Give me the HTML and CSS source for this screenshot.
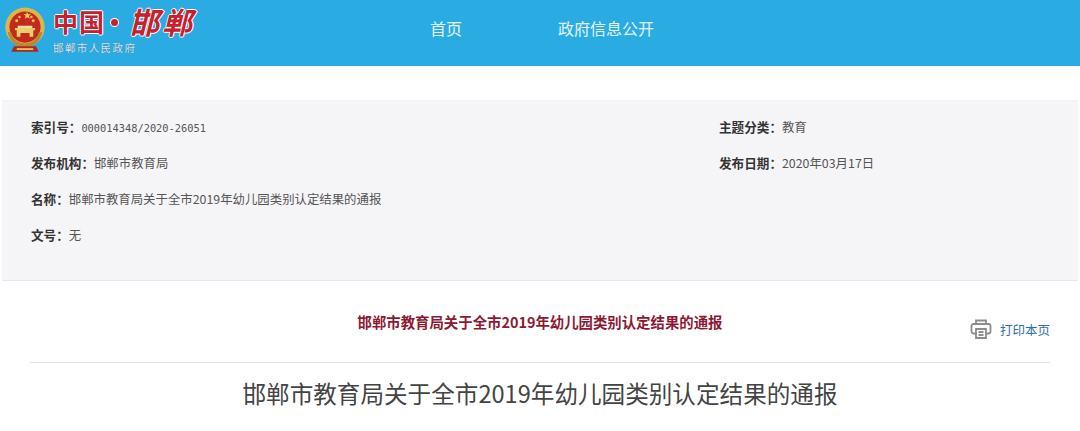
FILE: index.html
```html
<!DOCTYPE html>
<html lang="zh-CN">
<head>
<meta charset="utf-8">
<title>邯郸市教育局关于全市2019年幼儿园类别认定结果的通报</title>
<link rel="stylesheet" href="styles.css">
</head>
<body>
<header class="topbar">
  <a class="logo">
    <svg class="emblem" viewBox="0 0 48 54" width="44" height="49.500" aria-hidden="true">
      <circle cx="24" cy="23" r="21.500" fill="#d9b64e"/>
      <circle cx="24" cy="23" r="17" fill="#c5281f"/>
      <path d="M26 6l1.500 3 3-.4-2.200 2.200 1 3-2.800-1.500-2.800 1.500 1-3-2.200-2.200 3 .4z" fill="#f2d250"/>
      <circle cx="15" cy="16" r="1.600" fill="#f2d250"/><circle cx="18" cy="12" r="1.300" fill="#f2d250"/>
      <circle cx="33" cy="16" r="1.600" fill="#f2d250"/><circle cx="31" cy="12" r="1.300" fill="#f2d250"/>
      <path d="M13 24h22v2.500h-2v7h-4v-4h-10v4h-4v-7h-2z" fill="#edcf6a"/>
      <path d="M16 21.500h16v2.500h-16z" fill="#f4e1a0"/>
      <path d="M5 28c2 11 10 17 19 17s17-6 19-17l-4 1c-2 8-8 12-15 12s-13-4-15-12z" fill="#b98a2e"/>
      <path d="M12 44h24l3 6h-30z" fill="#b3261d"/>
      <path d="M15 46h18v2h-18z" fill="#e7c35e"/>
    </svg>
    <div class="brand">
      <div class="brand-name"><span class="cn">中国</span><span class="dot"></span><span class="city">邯郸</span></div>
      <div class="brand-sub">邯郸市人民政府</div>
    </div>
  </a>
  <nav class="nav">
    <a class="nav-home">首页</a>
    <a class="nav-info">政府信息公开</a>
  </nav>
</header>

<main class="sheet">
  <section class="meta">
    <div class="meta-row">
      <div><b>索引号：</b><span class="mono">000014348/2020-26051</span></div>
      <div class="meta-right"><b>主题分类：</b>教育</div>
    </div>
    <div class="meta-row">
      <div><b>发布机构：</b>邯郸市教育局</div>
      <div class="meta-right"><b>发布日期：</b>2020年03月17日</div>
    </div>
    <div class="meta-row"><div><b>名称：</b>邯郸市教育局关于全市2019年幼儿园类别认定结果的通报</div></div>
    <div class="meta-row"><div><b>文号：</b>无</div></div>
  </section>

  <section class="body">
    <div class="title-bar">
      <h2 class="red-title">邯郸市教育局关于全市2019年幼儿园类别认定结果的通报</h2>
      <a class="print">
        <svg class="print-icon" viewBox="0 0 22 22" width="22" height="22" aria-hidden="true">
          <path d="M6 6V2.500h10V6M6 15.500H3.500a2 2 0 0 1-2-2V8a2 2 0 0 1 2-2h15a2 2 0 0 1 2 2v5.500a2 2 0 0 1-2 2H16" fill="none" stroke="#8c8c8c" stroke-width="1.800"/>
          <path d="M6 11h10v9H6zM8.500 14h5M8.500 17h5" fill="none" stroke="#8c8c8c" stroke-width="1.800"/>
        </svg>
        <span>打印本页</span>
      </a>
    </div>
    <h1 class="doc-title">邯郸市教育局关于全市2019年幼儿园类别认定结果的通报</h1>
  </section>
</main>
</body>
</html>
```

FILE: styles.css
```css
* { box-sizing: border-box; }
html, body { margin: 0; height: 431px; overflow: hidden; background: #fff; }
body { font-family: "Noto Sans CJK SC", "Liberation Sans", sans-serif; color: #4a4a4a; }

.topbar {
  height: 66px;
  background: #2aace3;
  display: flex;
  align-items: center;
}
.logo { display: flex; align-items: flex-start; width: 430px; padding-left: 3px; height: 66px; }
.emblem { margin: 6px 0 0 0; flex: none; }
.brand { margin-left: 6px; padding-top: 5px; }
.brand-name {
  display: flex;
  align-items: center;
  height: 32px;
  color: #c8202d;
  font-weight: 700;
  font-size: 25px;
  line-height: 32px;
  text-shadow: 1px 0 0 #fff, -1px 0 0 #fff, 0 1px 0 #fff, 0 -1px 0 #fff;
}
.cn { letter-spacing: 1px; }
.dot { width: 7px; height: 7px; margin: 2px 11px 0 6px; border-radius: 50%; background: #c8202d; box-shadow: 0 0 0 1px #fff; }
.city { display: block; font-size: 30px; line-height: 34px; padding-right: 6px; letter-spacing: 3px; font-style: italic; margin-top: -1px; }
.brand-sub {
  margin-top: 4px;
  font-size: 10.500px;
  line-height: 14px;
  color: #cfe3ee;
  letter-spacing: 1.400px;
  text-shadow: 0 0 1px #5b6f80;
}

.nav { display: flex; align-items: center; color: #e4f4fb; font-size: 16px; line-height: 24px; margin-top: -10px; }
.nav-home { width: 128px; }

.sheet { margin: 34px 2px 0; }
.meta {
  height: 181px;
  background: #f5f4f7;
  border-top: 1px solid #f1f0f3;
  padding: 7px 0 0 29px;
  border-bottom: 1px solid #e8e8ea;
}
.meta-row { display: flex; height: 36px; align-items: center; font-size: 12.400px; color: #555; }
.meta-row b { color: #333; font-size: 12.600px; }
.mono { font-family: "DejaVu Sans Mono", monospace; font-size: 10.350px; }
.meta-right { position: absolute; left: 719px; }

.body { padding: 0 28px; }
.title-bar {
  position: relative;
  height: 82px;
  border-bottom: 1px solid #e2e2e2;
  padding-top: 31px;
  width: 1020px;
}
.red-title {
  margin: 0;
  text-align: center;
  color: #8c1a33;
  font-size: 14.400px;
  line-height: 20px;
  font-weight: 700;
  padding-right: 0;
}
.print {
  position: absolute;
  left: 940px;
  top: 37px;
  display: flex;
  align-items: center;
  gap: 8px;
  color: #2f6fa8;
  font-size: 12.500px;
}
.doc-title {
  margin: 0;
  padding-top: 14px;
  text-align: center;
  font-weight: 400;
  font-size: 23.600px;
  line-height: 32px;
  color: #444;
  width: 1020px;
}
```
